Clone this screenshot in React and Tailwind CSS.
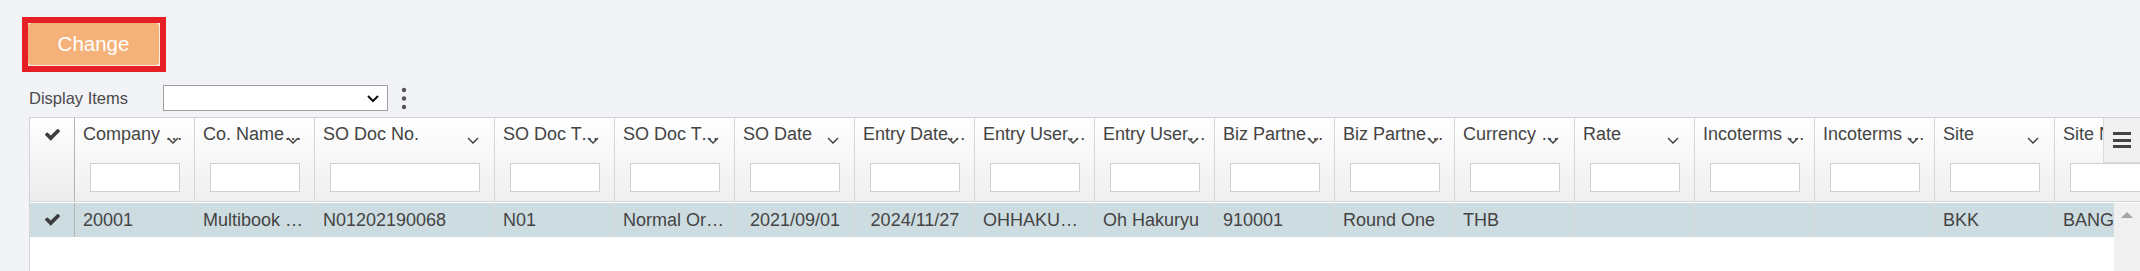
import React from "react";

const columns = [
  { label: "Company Code", w: "w-[120px]", iw: "w-[90px]", value: "20001" },
  { label: "Co. Name(Short)", w: "w-[120px]", iw: "w-[90px]", value: "Multibook Co., Ltd." },
  { label: "SO Doc No.", w: "w-[180px]", iw: "w-[150px]", value: "N01202190068" },
  { label: "SO Doc Type", w: "w-[120px]", iw: "w-[90px]", value: "N01" },
  { label: "SO Doc Type Name", w: "w-[120px]", iw: "w-[90px]", value: "Normal Order" },
  { label: "SO Date", w: "w-[120px]", iw: "w-[90px]", value: "2021/09/01", center: true },
  { label: "Entry Date/Time", w: "w-[120px]", iw: "w-[90px]", value: "2024/11/27", center: true },
  { label: "Entry User Code", w: "w-[120px]", iw: "w-[90px]", value: "OHHAKURYU" },
  { label: "Entry User Name", w: "w-[120px]", iw: "w-[90px]", value: "Oh Hakuryu" },
  { label: "Biz Partner Code", w: "w-[120px]", iw: "w-[90px]", value: "910001" },
  { label: "Biz Partner Name", w: "w-[120px]", iw: "w-[90px]", value: "Round One" },
  { label: "Currency Code", w: "w-[120px]", iw: "w-[90px]", value: "THB" },
  { label: "Rate", w: "w-[120px]", iw: "w-[90px]", value: "" },
  { label: "Incoterms Code", w: "w-[120px]", iw: "w-[90px]", value: "" },
  { label: "Incoterms Name", w: "w-[120px]", iw: "w-[90px]", value: "" },
  { label: "Site", w: "w-[120px]", iw: "w-[90px]", value: "BKK" },
  { label: "Site Name", w: "w-[120px]", iw: "w-[90px]", value: "BANGKOK" },
];

function CheckIcon() {
  return (
    <svg className="w-[15px] h-[12px]" viewBox="120 420 1552 1080" fill="#3d3d3d">
      <path d="M1671 566q0 40-28 68l-724 724-136 136q-28 28-68 28t-68-28l-136-136-362-362q-28-28-28-68t28-68l136-136q28-28 68-28t68 28l294 295 656-657q28-28 68-28t68 28l136 136q28 28 28 68z" />
    </svg>
  );
}

function SortIcon() {
  return (
    <svg width="12" height="7" viewBox="0 0 12 7">
      <polyline points="1,1 6,6 11,1" fill="none" stroke="#444" strokeWidth="1.5" />
    </svg>
  );
}

export default function App() {
  return (
    <div className="w-[2140px] h-[271px] overflow-hidden bg-[#f2f3f7] font-['Liberation_Sans',Arial,sans-serif] text-[#444]">
      {/* Change button */}
      <div className="pt-[17px] pl-[22px]">
        <div className="w-[144px] h-[55px] border-[6px] border-[#e61e25]">
          <button className="w-[132px] h-[43px] rounded-[4px] bg-[#f4b27a] border-r border-b border-white/70 text-white text-[20.5px] leading-none">
            Change
          </button>
        </div>
      </div>

      {/* Display items */}
      <div className="flex items-center h-[26px] mt-[13px] ml-[29px]">
        <span className="text-[16.5px] text-[#4a4a4a] w-[134px]">Display Items</span>
        <div className="relative w-[225px] h-[26px] border border-[#a0a0a0] bg-white">
          <svg className="absolute right-[8px] top-[9px]" width="12" height="8" viewBox="0 0 12 8">
            <polyline points="1,1 6,6 11,1" fill="none" stroke="#111" strokeWidth="2" />
          </svg>
        </div>
        <svg className="ml-[13px]" width="6" height="24" viewBox="0 0 6 24">
          <circle cx="3" cy="4" r="2.2" fill="#555" />
          <circle cx="3" cy="12.5" r="2.2" fill="#555" />
          <circle cx="3" cy="21" r="2.2" fill="#555" />
        </svg>
      </div>

      {/* Grid */}
      <div className="mt-[6px] ml-[29px] border-l border-t border-[#d4d4d4] bg-white">
        {/* Header */}
        <div className="relative flex h-[84px] border-b border-[#d4d4d4] overflow-hidden">
          <div className="shrink-0 w-[45px] border-r border-[#b4b4b4] bg-linear-to-b from-white to-[#ececec] flex justify-center pt-[11px]">
            <CheckIcon />
          </div>
          {columns.map((c) => (
            <div
              key={c.label}
              className={`relative shrink-0 ${c.w} border-r border-[#d6d6d6] bg-linear-to-b from-white to-[#efefef]`}
            >
              <div className="pl-[8px] pr-[7px] pt-[6px] text-[18px] leading-[21px] text-[#444] truncate">
                {c.label}
              </div>
              <span className="absolute right-[15px] top-[19px] flex">
                <SortIcon />
              </span>
              <div className={`mt-[18px] ml-[15px] h-[29px] ${c.iw} border border-[#d0d0d0] bg-white`} />
            </div>
          ))}
          <div className="absolute right-0 top-0 w-[37px] h-[45px] bg-[#f1f1f1] border-l border-b border-[#dadada] flex flex-col items-center justify-center gap-[3.5px]">
            <span className="w-[18px] h-[3px] bg-[#444]" />
            <span className="w-[18px] h-[3px] bg-[#444]" />
            <span className="w-[18px] h-[3px] bg-[#444]" />
          </div>
        </div>

        {/* Body */}
        <div className="flex h-[70px] pt-[1px]">
          <div className="flex-1 overflow-hidden">
            <div className="flex h-[34px] bg-[#cddce0]">
              <div className="shrink-0 w-[45px] border-r border-[#b4b4b4] flex items-center justify-center">
                <CheckIcon />
              </div>
              {columns.map((c) => (
                <div
                  key={c.label}
                  className={`shrink-0 ${c.w} border-r border-[#dadada] flex items-center pl-[8px] pr-[7px] text-[18px] ${c.center ? "justify-center" : ""}`}
                >
                  <span className="truncate">{c.value}</span>
                </div>
              ))}
            </div>
          </div>
          <div className="shrink-0 w-[26px] bg-[#f0f0f0] flex justify-center pt-[9px]">
            <div className="w-0 h-0 border-l-[6px] border-r-[6px] border-b-[6px] border-l-transparent border-r-transparent border-b-[#a6a6a6]" />
          </div>
        </div>
      </div>
    </div>
  );
}
